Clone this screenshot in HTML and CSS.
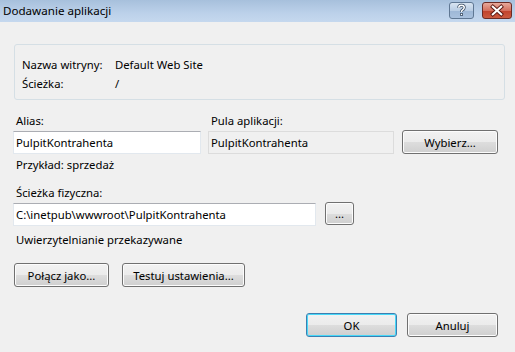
FILE: index.html
```html
<!DOCTYPE html>
<html>
<head>
    <meta charset="UTF-8">
    <title>Dodawanie aplikacji</title>
    <link rel="stylesheet" href="styles.css">
</head>
<body>
    <div class="window">
        <!-- title bar -->
        <div class="titlebar">
            <span class="title">Dodawanie aplikacji</span>
            <div class="caption-buttons">
                <div class="cap-btn help">
                    <svg width="25" height="17" viewBox="0 0 25 17">
                        <path d="M9.5 5.5 Q9.5 2.8 12.5 2.8 Q15.5 2.8 15.5 5.3 Q15.5 7 13.5 8 Q12.5 8.6 12.5 10" fill="none" stroke="#33475e" stroke-width="3.2"/>
                        <path d="M9.5 5.5 Q9.5 2.8 12.5 2.8 Q15.5 2.8 15.5 5.3 Q15.5 7 13.5 8 Q12.5 8.6 12.5 10" fill="none" stroke="#ffffff" stroke-width="1.6"/>
                        <rect x="11" y="11.3" width="3" height="3" fill="#33475e"/>
                        <rect x="11.8" y="12.1" width="1.4" height="1.4" fill="#ffffff"/>
                    </svg>
                </div>
                <div class="cap-btn close">
                    <svg width="30" height="17" viewBox="0 0 30 17">
                        <path d="M10.5 4.5 L19.5 12.5 M19.5 4.5 L10.5 12.5" stroke="#5c1a14" stroke-width="4.2" stroke-linecap="square"/>
                        <path d="M10.5 4.5 L19.5 12.5 M19.5 4.5 L10.5 12.5" stroke="#ffffff" stroke-width="2.2" stroke-linecap="square"/>
                    </svg>
                </div>
            </div>
        </div>

        <div class="content">
            <!-- site info -->
            <div class="group">
                <div class="info-row"><span class="info-label">Nazwa witryny:</span><span>Default Web Site</span></div>
                <div class="info-row"><span class="info-label">Ścieżka:</span><span>/</span></div>
            </div>

            <div class="field-row">
                <div class="field alias">
                    <label class="lbl">Alias:</label>
                    <div class="textbox">PulpitKontrahenta</div>
                </div>
                <div class="field pool">
                    <label class="lbl">Pula aplikacji:</label>
                    <div class="textbox readonly">PulpitKontrahenta</div>
                </div>
                <button type="button" class="btn btn-select">Wybierz...</button>
            </div>
            <div class="lbl hint">Przykład: sprzedaż</div>

            <label class="lbl path-label">Ścieżka fizyczna:</label>
            <div class="path-row">
                <div class="textbox path">C:\inetpub\wwwroot\PulpitKontrahenta</div>
                <button type="button" class="btn btn-browse">...</button>
            </div>
            <div class="lbl auth">Uwierzytelnianie przekazywane</div>

            <div class="action-row">
                <button type="button" class="btn btn-connect">Połącz jako...</button>
                <button type="button" class="btn btn-test">Testuj ustawienia...</button>
            </div>

            <div class="footer">
                <button type="button" class="btn btn-ok">OK</button>
                <button type="button" class="btn btn-cancel">Anuluj</button>
            </div>
        </div>
    </div>
</body>
</html>
```

FILE: styles.css
```css
body {
    margin: 0;
    background-color: #f0f0f0;
    font-family: "Noto Sans", "Open Sans", sans-serif;
    font-size: 11.3px;
    color: #000000;
}
.window {
    width: 515px;
    height: 352px;
    overflow: hidden;
}
.titlebar {
    height: 22px;
    display: flex;
    align-items: flex-start;
    justify-content: space-between;
    background: linear-gradient(to bottom, #a7c0dc, #bcd1ea 60%, #c5d8ee);
}
.title {
    margin-left: 3px;
    line-height: 22px;
    font-size: 11.6px;
    color: #000000;
}
.caption-buttons {
    display: flex;
    gap: 8px;
    margin-top: 2px;
    margin-right: 3px;
}
.cap-btn {
    height: 17px;
    border: 1px solid #5f7793;
    border-radius: 3px;
    box-sizing: border-box;
    display: flex;
    align-items: center;
    justify-content: center;
}
.cap-btn svg {
    display: block;
}
.help {
    width: 25px;
    background: linear-gradient(to bottom, #d8e4f1, #b9cde4 50%, #9db7d6 51%, #a9c1de);
}
.close {
    width: 30px;
    border-color: #6b2b25;
    background: linear-gradient(to bottom, #e8a99b, #d4705e 50%, #c1412c 51%, #cc5a3f);
}
.content {
    display: flex;
    flex-direction: column;
    align-items: flex-start;
}
.group {
    margin-top: 22px;
    margin-left: 14px;
    width: 491px;
    height: 56px;
    box-sizing: border-box;
    border: 1px solid #d5dfe5;
    border-radius: 3px;
    padding: 10px 0 0 7px;
}
.info-row {
    display: flex;
    height: 19px;
    line-height: 19px;
}
.info-label {
    width: 93px;
}
.lbl {
    display: block;
    height: 16px;
    line-height: 16px;
    margin-left: 16px;
}
.field-row {
    display: flex;
    align-items: flex-end;
    margin-top: 13px;
    margin-left: 13px;
}
.field .lbl {
    margin-left: 3px;
    margin-bottom: 2px;
}
.alias {
    width: 188px;
}
.pool {
    width: 186px;
    margin-left: 7px;
}
.textbox {
    height: 23px;
    line-height: 21px;
    box-sizing: border-box;
    border: 1px solid #e2e8ee;
    border-top-color: #abadb3;
    background-color: #ffffff;
    padding-left: 2px;
    white-space: nowrap;
}
.textbox.readonly {
    background-color: #f0f0f0;
    border-color: #dcdcdc;
}
.btn {
    height: 24px;
    box-sizing: border-box;
    border: 1px solid #707070;
    border-radius: 3px;
    background: linear-gradient(to bottom, #f2f2f2, #ebebeb 50%, #dddddd 51%, #cfcfcf);
    box-shadow: inset 0 0 0 1px #fcfcfc;
    font-family: inherit;
    font-size: 11.3px;
    color: #000000;
    padding: 0;
}
.btn-select {
    width: 96px;
    margin-left: 8px;
}
.hint {
    margin-top: 3px;
}
.path-label {
    margin-top: 12px;
}
.path-row {
    display: flex;
    margin-top: 2px;
    margin-left: 13px;
}
.path {
    width: 303px;
}
.btn-browse {
    width: 29px;
    height: 23px;
    margin-left: 9px;
    margin-top: -1px;
}
.auth {
    margin-top: 6px;
}
.action-row {
    display: flex;
    gap: 13px;
    margin-top: 15px;
    margin-left: 14px;
}
.btn-connect {
    width: 95px;
}
.btn-test {
    width: 123px;
}
.footer {
    display: flex;
    gap: 10px;
    align-self: flex-end;
    margin-top: 26px;
    margin-right: 17px;
}
.btn-ok, .btn-cancel {
    width: 91px;
}
.btn-ok {
    border-color: #3c7fb1;
    box-shadow: inset 0 0 0 1px #48d8f8;
}
```
